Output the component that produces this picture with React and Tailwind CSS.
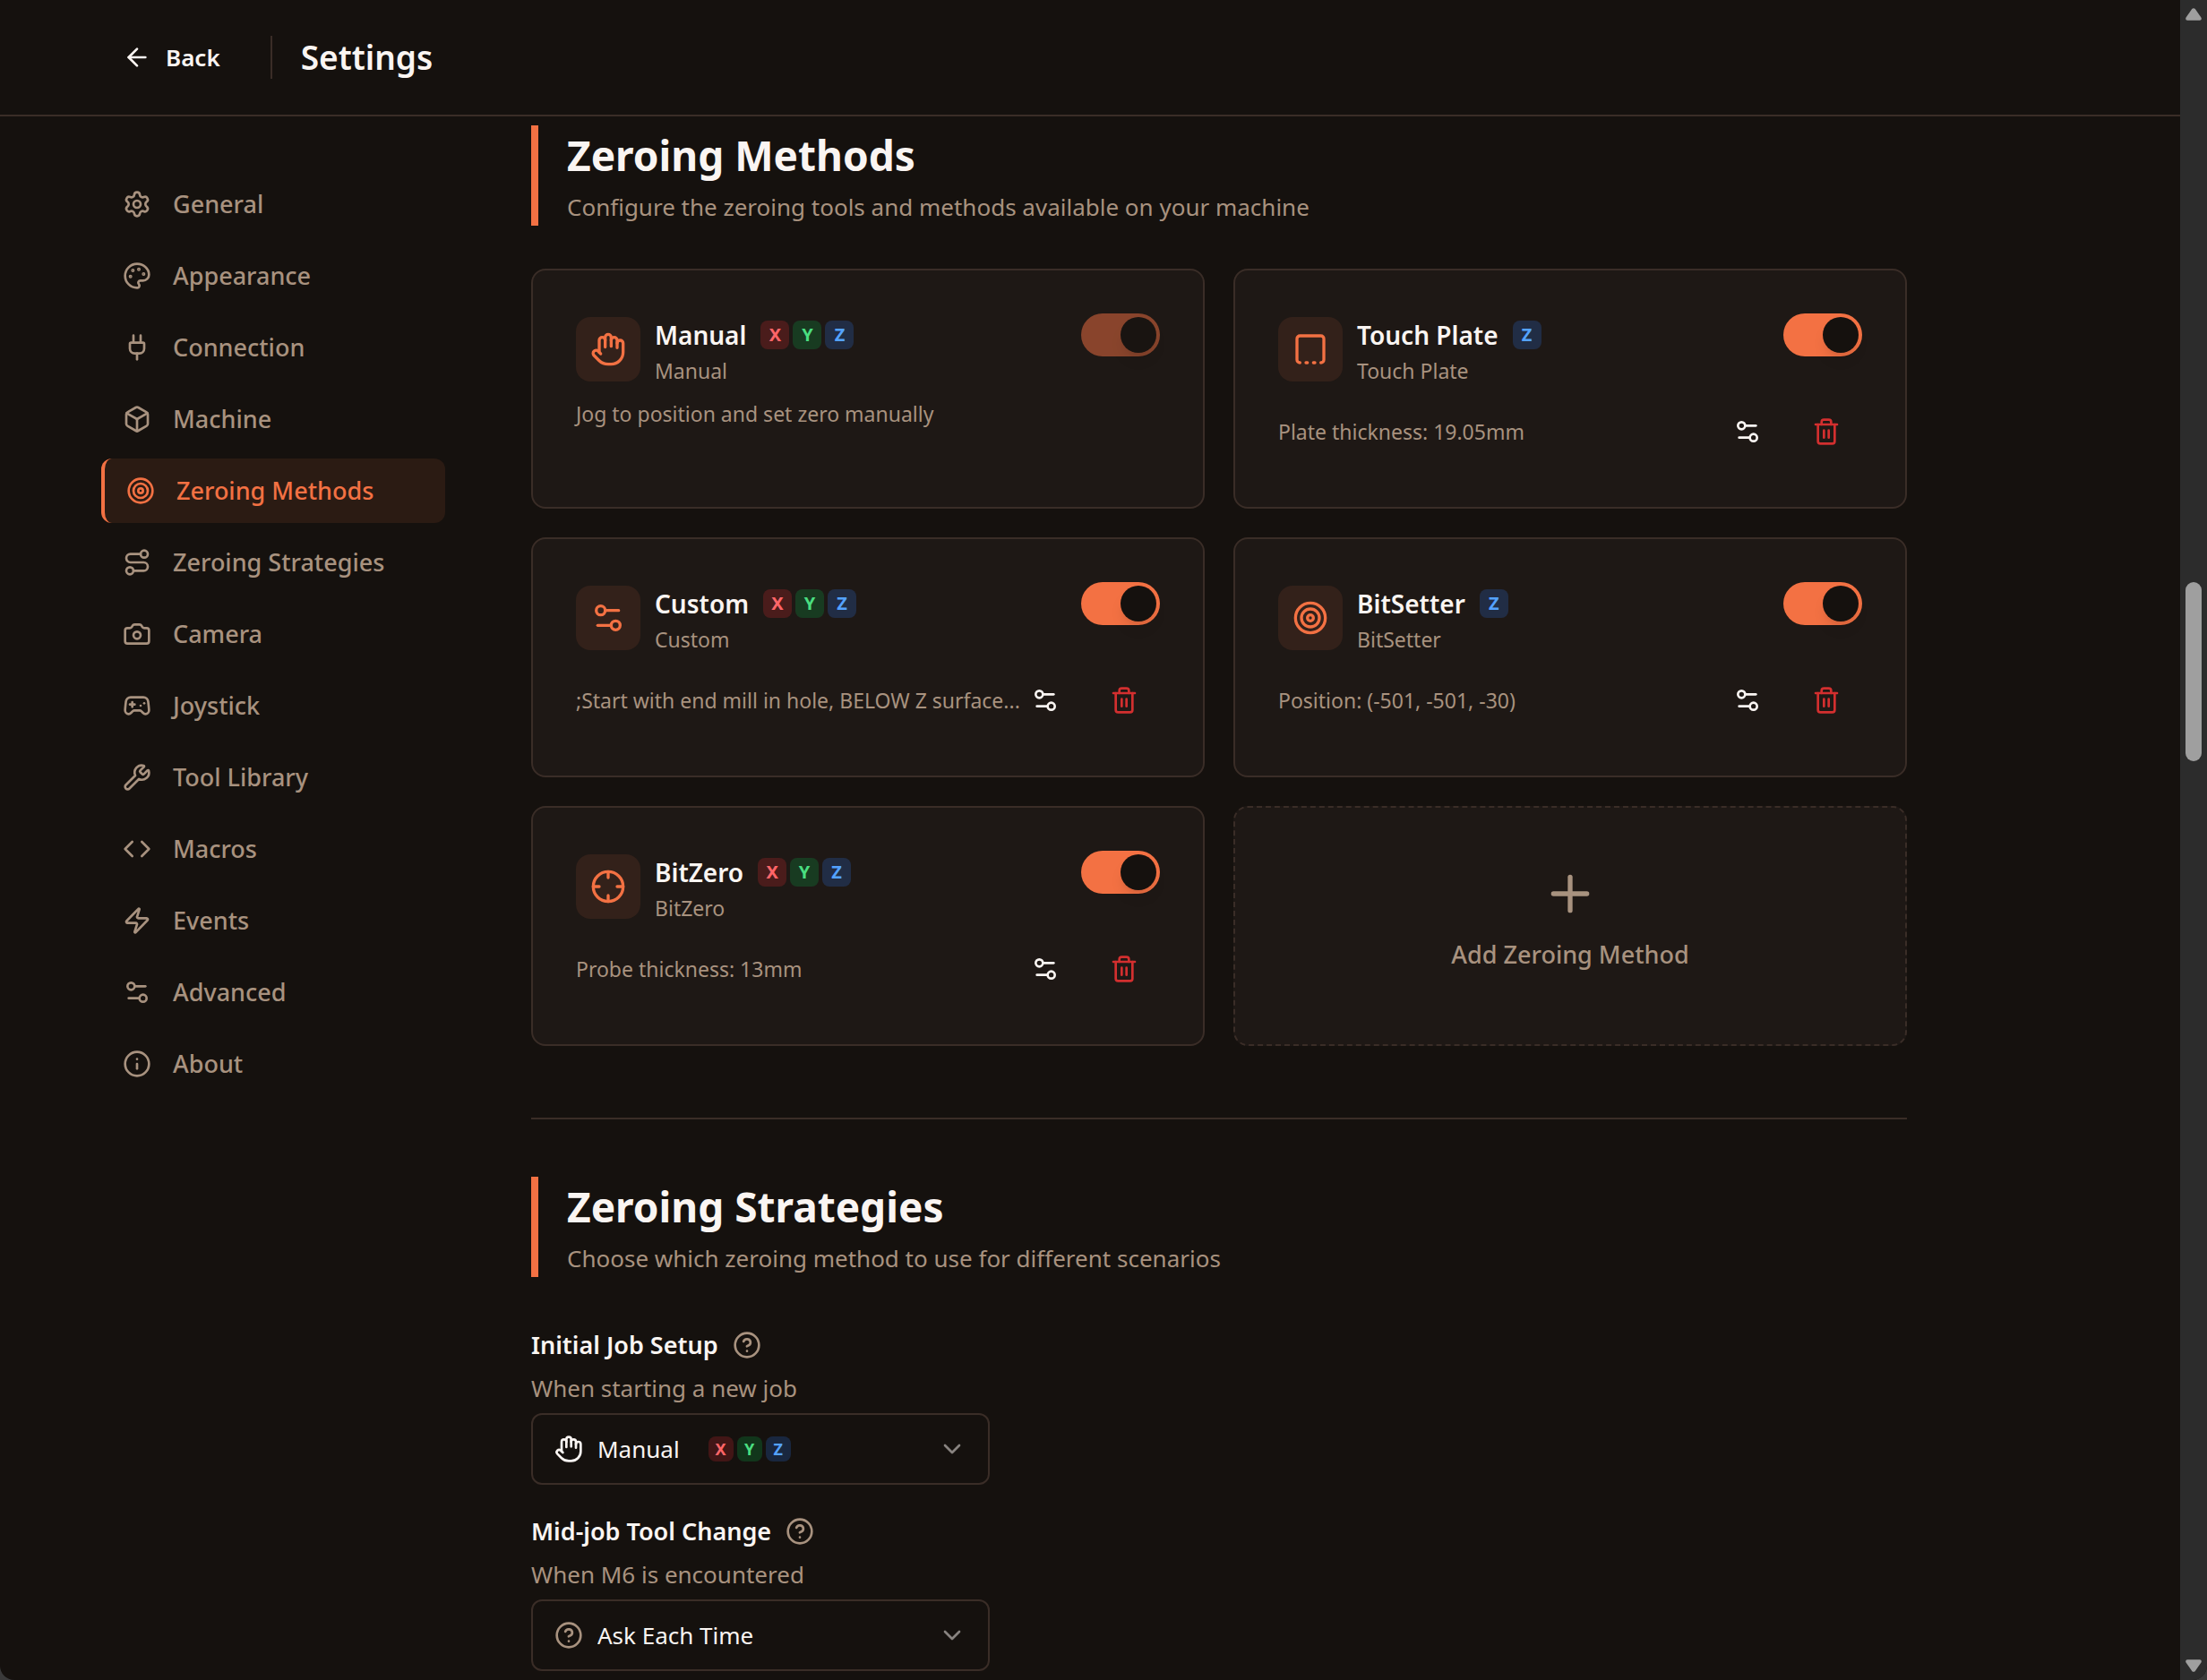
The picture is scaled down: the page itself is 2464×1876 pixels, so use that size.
import { useState } from 'react'
import {
  ArrowLeft,
  Box,
  Camera,
  ChevronDown,
  CircleHelp,
  Code,
  Crosshair,
  Gamepad2,
  Hand,
  Info,
  Palette,
  Plug,
  Plus,
  Route,
  Settings,
  Settings2,
  SquareDashedBottom,
  Target,
  Trash2,
  Wrench,
  Zap,
} from 'lucide-react'

const SECTIONS = [
  { id: 'general', label: 'General', icon: Settings },
  { id: 'appearance', label: 'Appearance', icon: Palette },
  { id: 'connection', label: 'Connection', icon: Plug },
  { id: 'machine', label: 'Machine', icon: Box },
  { id: 'zeroing-methods', label: 'Zeroing Methods', icon: Target },
  { id: 'zeroing-strategies', label: 'Zeroing Strategies', icon: Route },
  { id: 'camera', label: 'Camera', icon: Camera },
  { id: 'joystick', label: 'Joystick', icon: Gamepad2 },
  { id: 'tool-library', label: 'Tool Library', icon: Wrench },
  { id: 'macros', label: 'Macros', icon: Code },
  { id: 'events', label: 'Events', icon: Zap },
  { id: 'advanced', label: 'Advanced', icon: Settings2 },
  { id: 'about', label: 'About', icon: Info },
]

const METHODS = [
  { id: 'manual', name: 'Manual', type: 'Manual', axes: 'XYZ', icon: Hand, detail: 'Jog to position and set zero manually', locked: true },
  { id: 'touchplate', name: 'Touch Plate', type: 'Touch Plate', axes: 'Z', icon: SquareDashedBottom, detail: 'Plate thickness: 19.05mm' },
  { id: 'custom', name: 'Custom', type: 'Custom', axes: 'XYZ', icon: Settings2, detail: ';Start with end mill in hole, BELOW Z surface...' },
  { id: 'bitsetter', name: 'BitSetter', type: 'BitSetter', axes: 'Z', icon: Target, detail: 'Position: (-501, -501, -30)' },
  { id: 'bitzero', name: 'BitZero', type: 'BitZero', axes: 'XYZ', icon: Crosshair, detail: 'Probe thickness: 13mm' },
]

const AXIS_COLORS = {
  X: 'bg-red-500/20 text-[#ff6568]',
  Y: 'bg-green-500/20 text-[#4ade80]',
  Z: 'bg-blue-500/20 text-[#54a2ff]',
}

function AxisBadges({ axes, small }) {
  return (
    <span className="flex gap-1">
      {axes.split('').map((axis) => (
        <span
          key={axis}
          className={`flex items-center justify-center rounded-lg font-bold ${
            small ? 'size-7 text-lg' : 'size-8 text-xl'
          } ${AXIS_COLORS[axis]}`}
        >
          {axis}
        </span>
      ))}
    </span>
  )
}

function SectionHeader({ title, description }) {
  return (
    <div className="border-l-8 border-[#f37143] pl-8">
      <h2 className="text-[46px] leading-[66px] font-bold text-[#faf5f2]">{title}</h2>
      <p className="mt-1 text-[26px] leading-[42px]">{description}</p>
    </div>
  )
}

function MethodCard({ method }) {
  const [enabled, setEnabled] = useState(true)
  const Icon = method.icon

  return (
    <div className="rounded-2xl border-2 border-[#3a2d27] bg-[#1e1815] p-12">
      <div className="flex items-start justify-between">
        <div className="flex items-center gap-4">
          <div className="flex size-18 items-center justify-center rounded-2xl bg-[#33211a] text-[#f37143]">
            <Icon size={40} />
          </div>
          <div>
            <div className="flex items-center gap-4">
              <h3 className="text-[28px] leading-12 font-semibold text-[#faf5f2]">{method.name}</h3>
              <AxisBadges axes={method.axes} />
            </div>
            <p className="text-[23px] leading-8">{method.type}</p>
          </div>
        </div>
        <input
          type="checkbox"
          role="switch"
          aria-label={`Enable ${method.name}`}
          checked={enabled}
          disabled={method.locked}
          onChange={(e) => setEnabled(e.target.checked)}
          className="h-12 w-22 shrink-0 cursor-pointer appearance-none rounded-full bg-[#3a2d27] p-1 before:block before:size-10 before:rounded-full before:bg-[#15110e] before:shadow-lg before:transition checked:bg-[#f37143] checked:before:translate-x-10 disabled:opacity-50"
        />
      </div>

      {method.locked ? (
        <p className="mt-4 text-[23px] leading-8">{method.detail}</p>
      ) : (
        <div className="mt-4 flex items-center justify-between">
          <p className="min-w-0 flex-1 text-[23px] leading-8 whitespace-nowrap">{method.detail}</p>
          <div className="flex gap-2">
            <button
              aria-label={`Configure ${method.name}`}
              className="flex h-18 w-20 items-center justify-center rounded-xl text-[#faf5f2] hover:bg-[#33211a]"
            >
              <Settings2 size={32} />
            </button>
            <button
              aria-label={`Delete ${method.name}`}
              className="flex h-18 w-20 items-center justify-center rounded-xl text-[#d32f2f] hover:bg-[#33211a]"
            >
              <Trash2 size={32} />
            </button>
          </div>
        </div>
      )}
    </div>
  )
}

function StrategyField({ id, label, description, icon: Icon, iconClass, value, axes }) {
  return (
    <div className="flex flex-col gap-2">
      <div className="flex items-center gap-4">
        <label htmlFor={id} className="text-[27px] leading-10 font-semibold text-[#faf5f2]">
          {label}
        </label>
        <button aria-label={`Help: ${label}`}>
          <CircleHelp size={32} />
        </button>
      </div>
      <p className="text-[26px] leading-10">{description}</p>
      <div className="flex h-20 w-full max-w-[512px] items-center rounded-xl border-2 border-[#3a2d27] px-6 text-[#faf5f2]">
        <Icon size={32} className={iconClass} />
        <select
          id={id}
          defaultValue={value}
          className="ml-4 field-sizing-content appearance-none bg-transparent text-[26px] leading-10 focus:outline-none"
        >
          <option>{value}</option>
        </select>
        {axes && (
          <div className="ml-8">
            <AxisBadges axes={axes} small />
          </div>
        )}
        <ChevronDown size={32} className="ml-auto opacity-50" />
      </div>
    </div>
  )
}

function ScrollArrow({ className }) {
  return (
    <svg width="18" height="16" viewBox="0 0 18 16" fill="currentColor" className={className}>
      <path d="M7.2 2.1a2.2 2.2 0 0 1 3.6 0l6.6 9.4c.9 1.4.2 3.3-1.6 3.3H2.2c-1.8 0-2.5-1.9-1.6-3.3z" />
    </svg>
  )
}

function Scrollbar() {
  return (
    <div className="flex w-[30px] shrink-0 flex-col items-center bg-[#2c2c2c] py-2 text-[#9f9f9f]">
      <ScrollArrow />
      <div className="flex w-[18px] flex-1 flex-col">
        <div className="flex-[25]" />
        <div className="flex-[8] rounded-full bg-[#9f9f9f]" />
        <div className="flex-[40]" />
      </div>
      <ScrollArrow className="rotate-180" />
    </div>
  )
}

export default function App() {
  const [active, setActive] = useState('zeroing-methods')

  return (
    <div className="h-screen bg-[#3a3a3a] font-['Segoe_UI','Noto_Sans',sans-serif] text-[#a8927f]">
      <div className="flex h-full overflow-hidden rounded-b-2xl bg-[#15110e]">
        <div className="flex min-w-0 flex-1 flex-col">
          <header className="shrink-0 border-b-2 border-[#3a2d27] py-8">
            <div className="mx-auto flex max-w-[2304px] items-center gap-8 px-12 text-[#faf5f2]">
              <button className="flex h-16 items-center gap-4 px-6 text-[26px] font-semibold">
                <ArrowLeft size={32} />
                Back
              </button>
              <div className="h-12 w-[2px] bg-[#3a2d27]" />
              <h1 className="text-[37px] leading-14 font-semibold">Settings</h1>
            </div>
          </header>

          <div className="min-h-0 flex-1 overflow-hidden">
            <div className="mx-auto flex max-w-[2304px] gap-24 px-12">
              <nav className="flex w-96 shrink-0 flex-col gap-2 pt-[62px]">
                {SECTIONS.map(({ id, label, icon: Icon }) => (
                  <button
                    key={id}
                    onClick={() => setActive(id)}
                    className={`flex h-18 items-center gap-6 rounded-xl px-6 text-[27px] font-medium ${
                      active === id ? 'border-l-4 border-[#f37143] bg-[#2b1b13] text-[#f37143]' : 'hover:text-[#faf5f2]'
                    }`}
                  >
                    <Icon size={32} />
                    {label}
                  </button>
                ))}
              </nav>

              <main className="max-w-[1536px] min-w-0 flex-1 pt-[10px]">
                <section>
                  <SectionHeader
                    title="Zeroing Methods"
                    description="Configure the zeroing tools and methods available on your machine"
                  />
                  <div className="mt-12 grid grid-cols-2 gap-8">
                    {METHODS.map((method) => (
                      <MethodCard key={method.id} method={method} />
                    ))}
                    <button className="flex flex-col items-center justify-center gap-4 rounded-2xl border-2 border-dashed border-[#3a2d27] bg-[#1e1815] pb-4 text-[27px] leading-10 font-medium">
                      <Plus size={64} />
                      Add Zeroing Method
                    </button>
                  </div>
                </section>

                <hr className="mt-20 mb-16 border-t-2 border-[#3a2d27]" />

                <section>
                  <SectionHeader
                    title="Zeroing Strategies"
                    description="Choose which zeroing method to use for different scenarios"
                  />
                  <div className="mt-14 flex flex-col gap-8">
                    <StrategyField
                      id="initial-setup"
                      label="Initial Job Setup"
                      description="When starting a new job"
                      icon={Hand}
                      value="Manual"
                      axes="XYZ"
                    />
                    <StrategyField
                      id="tool-change"
                      label="Mid-job Tool Change"
                      description="When M6 is encountered"
                      icon={CircleHelp}
                      iconClass="text-[#a8927f]"
                      value="Ask Each Time"
                    />
                  </div>
                </section>
              </main>
            </div>
          </div>
        </div>
        <Scrollbar />
      </div>
    </div>
  )
}
